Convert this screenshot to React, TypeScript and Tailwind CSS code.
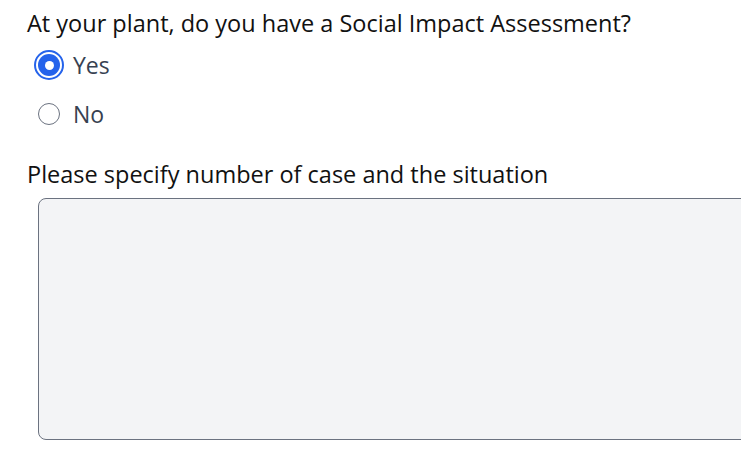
import React from "react";

export default function App() {
  return (
    <div className="w-[741px] h-[460px] overflow-hidden bg-white" style={{ fontFamily: '"Open Sans", sans-serif' }}>
      <div className="pl-[27px] pt-[7px]">
        <h2 className="text-[23.5px] leading-[32px] text-[#111111]">At your plant, do you have a Social Impact Assessment?</h2>
        <div className="mt-[10px] flex flex-col gap-[17px] pl-[11px]">
          <label className="flex items-center gap-[13px]">
            <span className="w-[30px] h-[30px] -ml-[4px] -mr-[4px] rounded-full border-2 border-[#2563eb] flex items-center justify-center">
              <span className="w-[22px] h-[22px] rounded-full bg-[#2563eb] flex items-center justify-center">
                <span className="w-[9px] h-[9px] rounded-full bg-white" />
              </span>
            </span>
            <span className="text-[23px] leading-[32px] text-[#374151]">Yes</span>
          </label>
          <label className="flex items-center gap-[13px]">
            <span className="w-[22px] h-[22px] rounded-full border border-[#6b7280] bg-white" />
            <span className="text-[23px] leading-[32px] text-[#374151]">No</span>
          </label>
        </div>
        <p className="mt-[28px] text-[23.5px] leading-[32px] text-[#111111]">Please specify number of case and the situation</p>
        <div className="mt-[8px] ml-[11px] w-[800px] h-[242px] rounded-[8px] border border-[#6b7280] bg-[#f3f4f6]" />
      </div>
    </div>
  );
}
